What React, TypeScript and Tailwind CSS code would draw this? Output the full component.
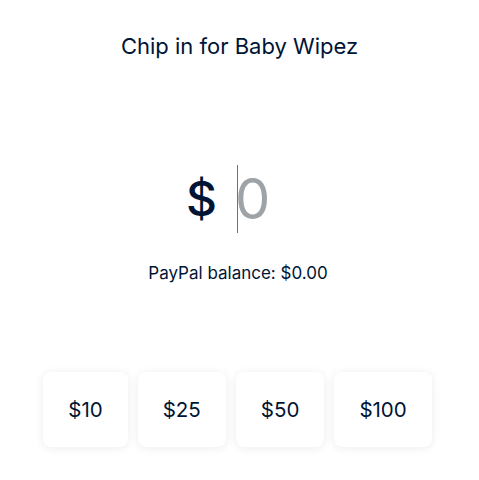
import React, { useState } from 'react';

const amounts = [10, 25, 50, 100];

const App: React.FC = () => {
  const [amount, setAmount] = useState('');

  return (
    <div
      className="w-[479px] h-[480px] bg-white flex flex-col items-center text-[#001435]"
      style={{ fontFamily: 'Inter, "Liberation Sans", Arial, sans-serif' }}
    >
      <h1 className="mt-[33px] text-[22px] leading-[26px]">Chip in for Baby Wipez</h1>

      {/* Amount input */}
      <div className="mt-[106px] flex items-center h-[68px] -ml-[18px]">
        <span className="text-[48px] leading-none mr-[20px] font-medium">$</span>
        <div className="h-[68px] w-px bg-[#6c7378]" />
        <input
          value={amount}
          onChange={(e) => setAmount(e.target.value)}
          placeholder="0"
          className="w-[40px] text-[56px] leading-none outline-none placeholder:text-[#9da3a6] -ml-[3px]"
          style={{ fontFamily: 'inherit' }}
        />
      </div>

      <p className="mt-[30px] text-[17px] leading-[20px] -ml-[3px]">PayPal balance: $0.00</p>

      {/* Quick amounts */}
      <div className="mt-[89px] flex gap-[10px] -ml-[4px]">
        {amounts.map((a) => (
          <button
            key={a}
            onClick={() => setAmount(String(a))}
            className="h-[75px] px-[25px] pt-[2px] rounded-[8px] bg-white shadow-[0_1px_10px_rgba(0,0,0,0.08)] text-[20.5px] text-[#001435]"
          >
            ${a}
          </button>
        ))}
      </div>
    </div>
  );
};

export default App;
